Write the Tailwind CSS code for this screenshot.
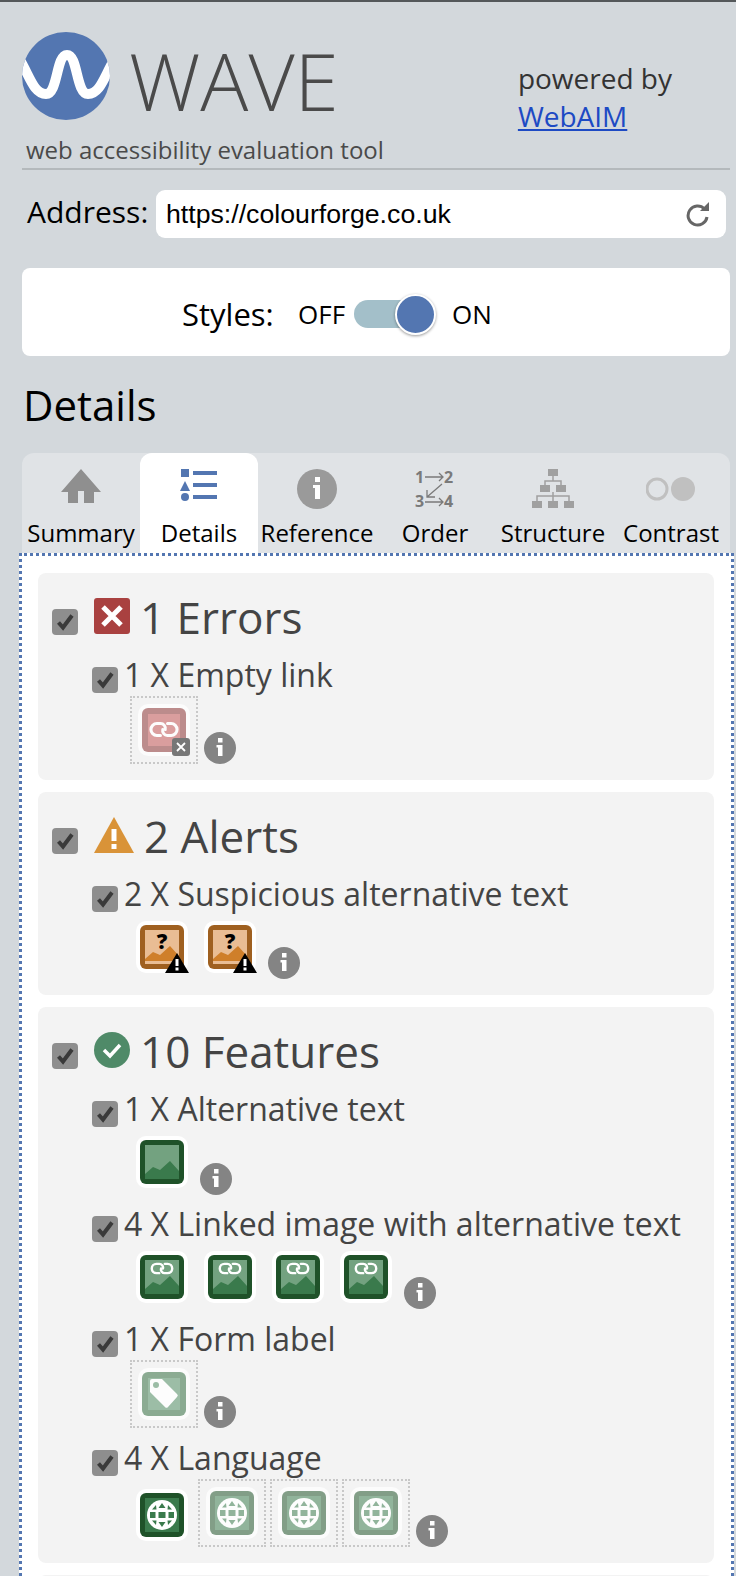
<!doctype html>
<html><head><meta charset="utf-8"><script src="https://cdn.jsdelivr.net/npm/@tailwindcss/browser@4"></script></head>
<body class="bg-[#d3d8dc] font-['Open_Sans',sans-serif] h-[1576px] overflow-hidden">
<svg class="hidden">
<symbol id="chk" viewBox="0 0 26 26"><rect width="26" height="26" rx="4" fill="#8e8e8e"/><path d="M6.500 13.500l4.500 5 9-12" fill="none" stroke="#3a3a3a" stroke-width="4"/></symbol>
<symbol id="info" viewBox="0 0 32 32"><circle cx="16" cy="16" r="16" fill="#848484"/><rect x="14" y="6" width="4.5" height="4.5" fill="#fff"/><path d="M12.5 13h6v11h-4.500v-8.500h-1.500z" fill="#fff"/></symbol>
<symbol id="lnk" viewBox="0 0 28 16"><g fill="none" stroke="#fff" stroke-width="2.6" stroke-linecap="round"><path d="M15 8a4 4 0 0 0-4-5H8a5 5 0 0 0 0 10h3"/><path d="M13 8a4 4 0 0 0 4 5h3a5 5 0 0 0 0-10h-3"/></g></symbol>
<symbol id="img" viewBox="0 0 44 44"><rect width="44" height="44" rx="6" fill="#1f5229"/><rect x="5" y="5" width="34" height="34" fill="#73a280"/><path d="M5 34l8-7 7 3 10-9 9 10v8H5z" fill="#3a7a4c"/></symbol>
<symbol id="limg" viewBox="0 0 44 44"><rect width="44" height="44" rx="6" fill="#1f5229"/><rect x="5" y="5" width="34" height="34" fill="#73a280"/><path d="M5 34l8-7 7 3 10-9 9 10v8H5z" fill="#3a7a4c"/><use href="#lnk" x="9" y="6" width="26" height="15"/></symbol>
<symbol id="qimg" viewBox="0 0 44 44"><rect width="44" height="44" rx="6" fill="#9f6020"/><rect x="5" y="5" width="34" height="34" fill="#e9bd94"/><path d="M5 34l8-7 7 3 10-9 9 10v5H5z" fill="#cf7f2a"/><text x="22" y="24" text-anchor="middle" font-family="Open Sans" font-weight="800" font-size="21" fill="#000">?</text></symbol>
<symbol id="globe" viewBox="0 0 44 44"><rect width="44" height="44" rx="6" fill="#1f5229"/><rect x="5" y="5" width="34" height="34" fill="#3a7a4c"/><circle cx="22" cy="22" r="15" fill="#fff"/><g fill="#3a7a4c"><path d="M22 10l3.500 5h-7zM22 34l3.500-5h-7z"/><rect x="10" y="19" width="5.500" height="6"/><rect x="18.500" y="19" width="7" height="6"/><rect x="28.500" y="19" width="5.500" height="6"/><path d="M12 16.500l4-4.500 .500 4.500zM32 16.500l-4-4.500-.500 4.500zM12 27.500l4 4.500 .500-4.500zM32 27.500l-4 4.500-.500-4.500z"/></g></symbol>
</svg>
<div class="h-[2px] bg-[#54585a]"></div>
<div class="ml-[22px] mr-[6px] h-[168px] border-b-2 border-[#b4b9bc] flex justify-between">
  <div class="pt-[30px]">
    <div class="flex">
      <svg class="w-[88px] h-[88px]" viewBox="0 0 88 88"><defs><clipPath id="c"><ellipse cx="44" cy="44" rx="44" ry="44"/></clipPath></defs><circle cx="44" cy="44" r="44" fill="#5376b1"/><path clip-path="url(#c)" d="M-2 28C8 45 12 62 24 62C36 62 34 23 45 23C56 23 54 62 66 62C78 62 82 45 92 28" fill="none" stroke="#fff" stroke-width="10"/></svg>
      <div class="ml-[19px] mt-[2px] text-[80px] leading-[92px] font-light text-[#4a4a4a]">WAVE</div>
    </div>
    <div class="ml-[4px] mt-[10px] text-[24px] leading-[28px] text-[#4a4a4a]">web accessibility evaluation tool</div>
  </div>
  <div class="pt-[57px] pr-[58px] text-[28px] leading-[38px] text-[#333]">
    <div>powered by</div>
    <a class="text-[#1d4ac4] underline" href="#">WebAIM</a>
  </div>
</div>
<div class="ml-[22px] mt-[20px] flex items-center">
  <div class="ml-[5px] w-[129px] -mt-[6px] text-[30px] text-black">Address:</div>
  <div class="w-[570px] h-[48px] rounded-[9px] bg-white flex items-center justify-between pl-[10px] pr-[16px]">
    <span class="font-['Liberation_Sans',sans-serif] text-[26.7px] text-black">https://colourforge.co.uk</span>
    <svg class="w-[25px] h-[25px]" viewBox="0 0 25 25"><path d="M19.500 7A9.500 9.500 0 1 0 22 15" fill="none" stroke="#666" stroke-width="3"/><path d="M15 9h9V0z" fill="#666"/></svg>
  </div>
</div>
<div class="ml-[22px] mr-[6px] mt-[30px] h-[88px] pt-[4px] bg-white rounded-[8px] flex items-center pl-[160px] text-black">
  <span class="w-[116px] text-[31px]">Styles:</span>
  <span class="w-[56px] text-[26px]">OFF</span>
  <div class="w-[98px] h-[40px] flex items-center relative">
    <div class="w-[62px] h-[28px] rounded-full bg-[#a3bfc9]"></div>
    <div class="absolute left-[41px] top-0 w-[41px] h-[41px] rounded-full bg-[#5376b1] border-2 border-white shadow-[0_1px_3px_#0006]"></div>
  </div>
  <span class="text-[26px]">ON</span>
</div>
<h2 class="mx-[23px] mt-[24px] text-[42px] leading-[50px] text-black">Details</h2>
<div class="ml-[22px] mr-[6px] mt-[23px] h-[100px] bg-[#e0e3e6] rounded-t-[12px] grid grid-cols-6 text-center text-[24px] leading-[30px] text-black">
  <div class="pt-[16px] flex flex-col items-center"><svg class="w-[40px] h-[40px] mb-[9px]" viewBox="0 0 40 40"><path d="M20 0L40 23H33V34H23V22H17V34H7V23H0z" fill="#8f8f8f"/></svg><span>Summary</span></div>
  <div class="pt-[16px] flex flex-col items-center bg-white rounded-t-[12px]"><svg class="w-[40px] h-[40px] mb-[9px]" viewBox="0 0 40 40" fill="#5376b1"><rect x="2" y="0" width="8" height="8"/><rect x="14" y="2" width="24" height="4"/><path d="M6 12l5 10H1z"/><rect x="14" y="14" width="24" height="4"/><circle cx="6" cy="28" r="4"/><rect x="14" y="26" width="24" height="4"/></svg><span>Details</span></div>
  <div class="pt-[16px] flex flex-col items-center"><svg class="w-[40px] h-[40px] mb-[9px]" viewBox="0 0 40 40"><circle cx="20" cy="20" r="20" fill="#9a9a9a"/><rect x="18" y="8" width="5" height="5" fill="#fff"/><path d="M16 16h7v14h-5V19h-2z" fill="#fff"/></svg><span>Reference</span></div>
  <div class="pt-[16px] flex flex-col items-center"><svg class="w-[40px] h-[48px] -mt-[4px] mb-[5px]" viewBox="0 -4 40 48" font-family="Open Sans" font-weight="700" font-size="16" fill="#7a7a7a"><text x="0" y="14">1</text><text x="29" y="14">2</text><text x="0" y="38">3</text><text x="29" y="38">4</text><g fill="none" stroke="#7a7a7a" stroke-width="1.300"><path d="M10 8h18M24 4l4 4-4 4M10 33h18M24 29l4 4-4 4M27 15L12 28M12 21v7h8"/></g></svg><span>Order</span></div>
  <div class="pt-[16px] flex flex-col items-center"><svg class="w-[42px] h-[40px] mb-[9px]" viewBox="0 0 42 40" fill="#a0a0a0"><rect x="16" y="0" width="10" height="7"/><rect x="8" y="16" width="10" height="7"/><rect x="24" y="16" width="10" height="7"/><rect x="0" y="32" width="10" height="7"/><rect x="16" y="32" width="10" height="7"/><rect x="32" y="32" width="10" height="7"/><path d="M21 7v5M13 16v-4h16v4M21 23v3M5 32v-5h32v5M21 26v6" fill="none" stroke="#a0a0a0" stroke-width="1.500"/></svg><span>Structure</span></div>
  <div class="pt-[16px] flex flex-col items-center"><svg class="w-[50px] h-[40px] mb-[9px]" viewBox="0 0 50 40"><circle cx="11" cy="20" r="10" fill="none" stroke="#c0c0c0" stroke-width="3"/><circle cx="37" cy="20" r="12" fill="#c0c0c0"/></svg><span>Contrast</span></div>
</div>
<div class="ml-[19px] w-[715px] border-3 border-dotted border-[#5376b1] bg-white pl-[16px] pt-[17px] text-[#444]">
  <div class="w-[676px] bg-[#f3f3f3] rounded-[8px] pb-[16px]">
    <div class="flex items-start h-[72px] pl-[14px]">
      <svg class="w-[26px] h-[26px] mt-[36px]"><use href="#chk"/></svg>
      <svg class="ml-[16px] mt-[25px] w-[36px] h-[36px]" viewBox="0 0 36 36"><rect width="36" height="36" rx="3" fill="#a94140"/><path d="M9 9l18 18M27 9L9 27" stroke="#fff" stroke-width="5"/></svg>
      <span class="ml-[10px] mt-[16px] text-[44px] leading-[56px]">1 Errors</span>
    </div>
    <div class="flex items-start h-[39px] mt-[12px] pl-[54px]">
      <svg class="w-[26px] h-[26px] mt-[10px]"><use href="#chk"/></svg>
      <span class="ml-[6px] text-[32px] leading-[36px]">1 X Empty link</span>
    </div>
    <div class="flex items-end pl-[92px]">
      <div class="w-[68px] h-[68px] border-2 border-dotted border-[#c8c8c8] flex items-center justify-center">
        <div class="w-[52px] h-[52px] bg-white/70 rounded-[10px] p-[4px] relative shrink-0">
          <svg class="w-[44px] h-[44px] opacity-60" viewBox="0 0 44 44"><rect width="44" height="44" rx="6" fill="#934343"/><rect x="6" y="6" width="32" height="32" fill="#c46060"/><use href="#lnk" x="5" y="12" width="34" height="19"/></svg>
          <div class="absolute right-0 bottom-0 w-[18px] h-[18px] bg-[#777] rounded-[3px] flex items-center justify-center"><svg class="w-[10px] h-[10px]" viewBox="0 0 10 10"><path d="M1 1l8 8M9 1L1 9" stroke="#fff" stroke-width="1.800"/></svg></div>
        </div>
      </div>
      <svg class="ml-[6px] w-[32px] h-[32px]"><use href="#info"/></svg>
    </div>
  </div>
  <div class="mt-[12px] w-[676px] bg-[#f3f3f3] rounded-[8px] pb-[16px]">
    <div class="flex items-start h-[72px] pl-[14px]">
      <svg class="w-[26px] h-[26px] mt-[36px]"><use href="#chk"/></svg>
      <svg class="ml-[16px] mt-[25px] w-[40px] h-[36px]" viewBox="0 0 40 36"><path d="M20 0L40 36H0z" fill="#d99338"/><rect x="17.500" y="12" width="5" height="12" fill="#fff"/><rect x="17.500" y="27" width="5" height="5" fill="#fff"/></svg>
      <span class="ml-[10px] mt-[16px] text-[44px] leading-[56px]">2 Alerts</span>
    </div>
    <div class="flex items-start h-[39px] mt-[12px] pl-[54px]">
      <svg class="w-[26px] h-[26px] mt-[10px]"><use href="#chk"/></svg>
      <span class="ml-[6px] text-[32px] leading-[36px]">2 X Suspicious alternative text</span>
    </div>
    <div class="flex items-end h-[64px] pl-[98px]">
      <div class="mb-[6px] w-[52px] h-[52px] bg-white rounded-[10px] p-[4px] relative"><svg class="w-[44px] h-[44px]"><use href="#qimg"/></svg><svg class="absolute -right-[1px] bottom-0 w-[24px] h-[20px]" viewBox="0 0 24 20"><path d="M12 0L24 20H0z" fill="#000"/><rect x="10.500" y="6" width="3" height="7" fill="#fff"/><rect x="10.500" y="14.500" width="3" height="3" fill="#fff"/></svg></div>
      <div class="ml-[16px] mb-[6px] w-[52px] h-[52px] bg-white rounded-[10px] p-[4px] relative"><svg class="w-[44px] h-[44px]"><use href="#qimg"/></svg><svg class="absolute -right-[1px] bottom-0 w-[24px] h-[20px]" viewBox="0 0 24 20"><path d="M12 0L24 20H0z" fill="#000"/><rect x="10.500" y="6" width="3" height="7" fill="#fff"/><rect x="10.500" y="14.500" width="3" height="3" fill="#fff"/></svg></div>
      <svg class="ml-[12px] w-[32px] h-[32px]"><use href="#info"/></svg>
    </div>
  </div>
  <div class="mt-[12px] w-[676px] bg-[#f3f3f3] rounded-[8px] pb-[16px]">
    <div class="flex items-start h-[72px] pl-[14px]">
      <svg class="w-[26px] h-[26px] mt-[36px]"><use href="#chk"/></svg>
      <svg class="ml-[16px] mt-[25px] w-[36px] h-[36px]" viewBox="0 0 36 36"><circle cx="18" cy="18" r="18" fill="#4f8a68"/><path d="M10 18l6 6 10-11" fill="none" stroke="#fff" stroke-width="3.500"/></svg>
      <span class="ml-[10px] mt-[16px] text-[44px] leading-[56px]">10 Features</span>
    </div>
    <div class="flex items-start h-[39px] mt-[12px] pl-[54px]">
      <svg class="w-[26px] h-[26px] mt-[10px]"><use href="#chk"/></svg>
      <span class="ml-[6px] text-[32px] leading-[36px]">1 X Alternative text</span>
    </div>
    <div class="flex items-end h-[65px] pl-[98px]">
      <div class="mb-[7px] w-[52px] h-[52px] bg-white rounded-[10px] p-[4px]"><svg class="w-[44px] h-[44px]"><use href="#img"/></svg></div>
      <svg class="ml-[12px] w-[32px] h-[32px]"><use href="#info"/></svg>
    </div>
    <div class="flex items-start h-[39px] mt-[11px] pl-[54px]">
      <svg class="w-[26px] h-[26px] mt-[10px]"><use href="#chk"/></svg>
      <span class="ml-[6px] text-[32px] leading-[36px]">4 X Linked image with alternative text</span>
    </div>
    <div class="flex items-end h-[64px] pl-[98px]">
      <div class="mb-[6px] w-[52px] h-[52px] bg-white rounded-[10px] p-[4px]"><svg class="w-[44px] h-[44px]"><use href="#limg"/></svg></div>
      <div class="ml-[16px] mb-[6px] w-[52px] h-[52px] bg-white rounded-[10px] p-[4px]"><svg class="w-[44px] h-[44px]"><use href="#limg"/></svg></div>
      <div class="ml-[16px] mb-[6px] w-[52px] h-[52px] bg-white rounded-[10px] p-[4px]"><svg class="w-[44px] h-[44px]"><use href="#limg"/></svg></div>
      <div class="ml-[16px] mb-[6px] w-[52px] h-[52px] bg-white rounded-[10px] p-[4px]"><svg class="w-[44px] h-[44px]"><use href="#limg"/></svg></div>
      <svg class="ml-[12px] w-[32px] h-[32px]"><use href="#info"/></svg>
    </div>
    <div class="flex items-start h-[39px] mt-[12px] pl-[54px]">
      <svg class="w-[26px] h-[26px] mt-[10px]"><use href="#chk"/></svg>
      <span class="ml-[6px] text-[32px] leading-[36px]">1 X Form label</span>
    </div>
    <div class="flex items-end pl-[92px]">
      <div class="w-[68px] h-[68px] border-2 border-dotted border-[#c8c8c8] flex items-center justify-center">
        <div class="w-[52px] h-[52px] bg-white/70 rounded-[10px] p-[4px] shrink-0">
          <svg class="w-[44px] h-[44px] opacity-55" viewBox="0 0 44 44"><rect width="44" height="44" rx="6" fill="#2f6a3c"/><rect x="6" y="6" width="32" height="32" fill="#4f8a60"/><path d="M8 9a2 2 0 0 1 2-2h10l15 15a2 2 0 0 1 0 3l-9 10a2 2 0 0 1-3 0L8 20z" fill="#fff"/><circle cx="14" cy="13" r="3" fill="#4f8a60"/></svg>
        </div>
      </div>
      <svg class="ml-[6px] w-[32px] h-[32px]"><use href="#info"/></svg>
    </div>
    <div class="flex items-start h-[39px] mt-[12px] pl-[54px]">
      <svg class="w-[26px] h-[26px] mt-[10px]"><use href="#chk"/></svg>
      <span class="ml-[6px] text-[32px] leading-[36px]">4 X Language</span>
    </div>
    <div class="flex items-end pl-[98px]">
      <div class="mb-[6px] w-[52px] h-[52px] bg-white rounded-[10px] p-[4px] shrink-0"><svg class="w-[44px] h-[44px]"><use href="#globe"/></svg></div>
      <div class="ml-[10px] w-[68px] h-[68px] border-2 border-dotted border-[#c8c8c8] flex items-center justify-center"><div class="w-[52px] h-[52px] bg-white/70 rounded-[10px] p-[4px] shrink-0"><svg class="w-[44px] h-[44px] opacity-55"><use href="#globe"/></svg></div></div>
      <div class="ml-[4px] w-[68px] h-[68px] border-2 border-dotted border-[#c8c8c8] flex items-center justify-center"><div class="w-[52px] h-[52px] bg-white/70 rounded-[10px] p-[4px] shrink-0"><svg class="w-[44px] h-[44px] opacity-55"><use href="#globe"/></svg></div></div>
      <div class="ml-[4px] w-[68px] h-[68px] border-2 border-dotted border-[#c8c8c8] flex items-center justify-center"><div class="w-[52px] h-[52px] bg-white/70 rounded-[10px] p-[4px] shrink-0"><svg class="w-[44px] h-[44px] opacity-55"><use href="#globe"/></svg></div></div>
      <svg class="ml-[6px] w-[32px] h-[32px]"><use href="#info"/></svg>
    </div>
  </div>
  <div class="mt-[12px] w-[676px] h-[40px] bg-[#f3f3f3] rounded-[8px]"></div>
</div>
</body></html>
